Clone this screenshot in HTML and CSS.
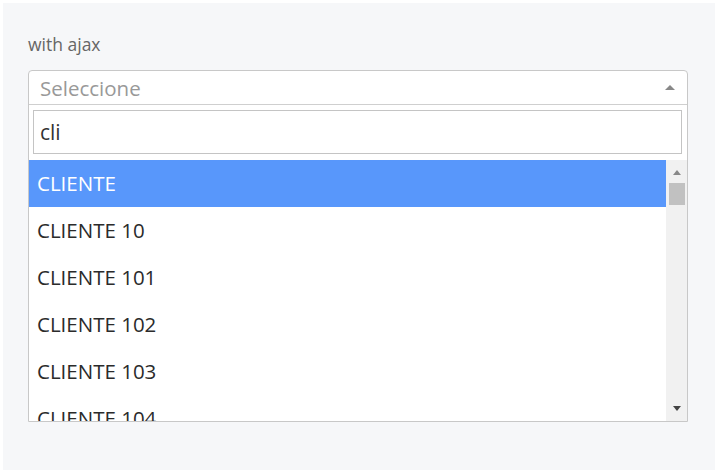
FILE: index.html
```html
<!doctype html>
<html>
<head>
<meta charset="utf-8">
<title>with ajax</title>
<link rel="stylesheet" href="styles.css">
</head>
<body>
<div class="panel">
	<label class="label">with ajax</label>
	<div class="select">
		<div class="select-box">
			<span class="placeholder">Seleccione</span>
			<span class="arrow up"></span>
		</div>
		<div class="dropdown">
			<div class="search">
				<div class="search-input">cli</div>
			</div>
			<div class="results">
				<ul class="list">
					<li class="on">CLIENTE</li>
					<li>CLIENTE 10</li>
					<li>CLIENTE 101</li>
					<li>CLIENTE 102</li>
					<li>CLIENTE 103</li>
					<li>CLIENTE 104</li>
				</ul>
				<div class="scroll">
					<span class="arrow up small"></span>
					<div class="thumb"></div>
					<div class="track"></div>
					<span class="arrow down small"></span>
				</div>
			</div>
		</div>
	</div>
</div>
</body>
</html>
```

FILE: styles.css
```css
body,ul,li{margin:0;padding:0;}
li{ list-style:none;}
body{ background:#fff; font-family:"Open Sans","DejaVu Sans",sans-serif;}

.panel{ margin:3px; height:467px; width:712px; box-sizing:border-box; background:#f6f7f9; padding:30px 0 0 25px;}
.label{ display:block; height:22px; line-height:22px; font-size:17.5px; color:#666; margin-bottom:15px;}

.select{ width:660px; border:1px solid #c8c8c8; border-radius:4px 4px 0 0; background:#fff; box-sizing:border-box;}
.select-box{ height:33px; border-bottom:1px solid #cfcfcf; display:flex; align-items:center; justify-content:space-between; padding:0 12px 0 11px;}
.placeholder{ font-size:20.5px; color:#999;}

.arrow{ width:0; height:0; border-left:5px solid transparent; border-right:5px solid transparent;}
.arrow.up{ border-bottom:5px solid #888;}
.arrow.down{ border-top:5px solid #444;}
.arrow.small{ border-left-width:4px; border-right-width:4px;}

.search{ padding:5px 5px 6px 4px;}
.search-input{ height:42px; border:1px solid #c4c4c4; line-height:42px; font-size:21px; color:#333; padding-left:6px;}

.results{ display:flex; height:261px;}
.list{ flex:1; overflow:hidden;}
.list li{ height:47px; line-height:47px; padding-left:8px; font-size:20.5px; color:#2b2b2b;}
.list li.on{ background:#5897fb; color:#fff;}

.scroll{ width:21px; background:#f1f1f1; display:flex; flex-direction:column; align-items:center;}
.scroll .up{ margin-top:10px;}
.thumb{ width:16px; height:22px; background:#c1c1c1; margin-top:8px;}
.track{ flex:1;}
.scroll .down{ margin-bottom:10px;}
```
